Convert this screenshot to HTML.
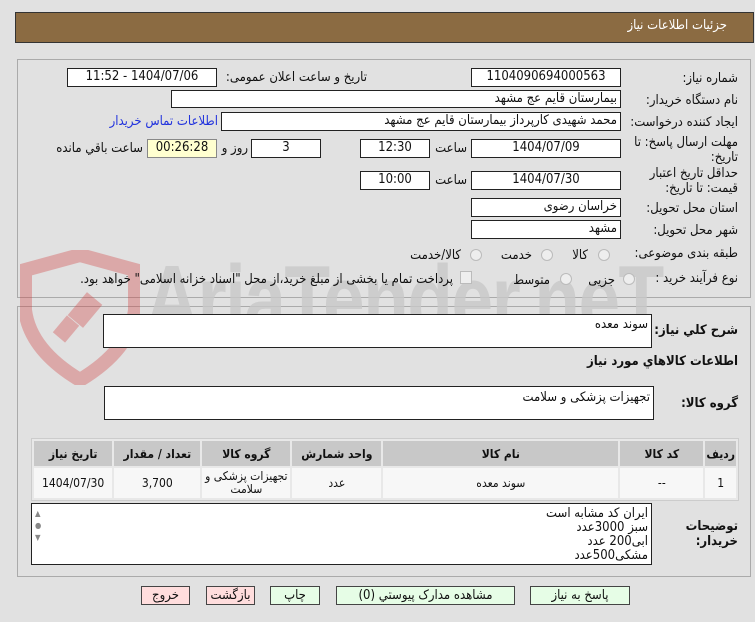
<!DOCTYPE html>
<html><head><meta charset="utf-8"><style>
body{margin:0;width:755px;height:622px;background:#e1e1e1;font-family:"DejaVu Sans Condensed","DejaVu Sans","Liberation Sans",sans-serif;font-size:12px;color:#111;position:relative;overflow:hidden}
.a{position:absolute}
.box{position:absolute;background:#fff;border:1px solid #222;box-sizing:border-box;direction:rtl;font-size:13px;line-height:16px;padding:0 3px;white-space:nowrap}
.c{text-align:center}
.l{position:absolute;direction:rtl;white-space:nowrap;font-size:13px}
.r{position:absolute;width:12px;height:12px;border-radius:50%;border:1px solid #bbb;background:#eee;box-sizing:border-box}
.btn{position:absolute;top:586px;height:19px;border:1px solid #444;box-sizing:border-box;text-align:center;font-size:13px;line-height:17px;direction:rtl}
table{border-collapse:separate;border-spacing:2px;position:absolute;left:31px;top:438px;width:708px;background:#e8e8e8;border:1px solid #ccc}
th{background:#c8c8c8;font-weight:bold;height:23px;font-size:12px}
td{background:#f7f7f7;height:28px;text-align:center;font-size:12px;line-height:13px}
</style></head><body>
<div class="a" style="left:15px;top:12px;width:739px;height:31px;background:#8b6b42;border:1px solid #333;box-sizing:border-box"></div>
<div class="l" style="right:28px;top:18px;color:#fff;font-size:13px">جزئیات اطلاعات نیاز</div>

<div class="a" style="left:17px;top:59px;width:734px;height:239px;border:1px solid #aaa;box-sizing:border-box"></div>
<div class="a" style="left:17px;top:306px;width:734px;height:271px;border:1px solid #aaa;box-sizing:border-box"></div>

<div class="a" style="left:20px;top:250px;width:120px;height:135px;opacity:.35">
<svg width="120" height="135" viewBox="0 0 120 135"><path d="M60 5 L115 20 L115 60 Q110 100 60 130 Q10 100 5 60 L5 20 Z" fill="none" stroke="#d04040" stroke-width="14"/><rect x="55" y="45" width="20" height="30" fill="#d04040" transform="rotate(40 65 60)"/><rect x="38" y="68" width="16" height="22" fill="#d04040" transform="rotate(40 46 79)"/></svg></div>
<div class="a" style="left:145px;top:245px;font-size:96px;font-family:'Liberation Sans',sans-serif;font-weight:bold;color:#c9c9c9;opacity:.8;letter-spacing:-2px;line-height:110px;transform:scaleX(.78);transform-origin:left">AriaTender.neT</div>

<div class="l" style="right:17px;top:71px">شماره نیاز:</div>
<div class="box c" style="left:471px;top:68px;width:150px;height:19px">1104090694000563</div>
<div class="l" style="right:388px;top:70px">تاریخ و ساعت اعلان عمومی:</div>
<div class="box c" style="left:67px;top:68px;width:150px;height:19px">1404/07/06 - 11:52</div>

<div class="l" style="right:17px;top:93px">نام دستگاه خریدار:</div>
<div class="box" style="left:171px;top:90px;width:450px;height:18px">بیمارستان قایم  عج  مشهد</div>

<div class="l" style="right:17px;top:115px">ایجاد کننده درخواست:</div>
<div class="box" style="left:221px;top:112px;width:400px;height:19px">محمد شهیدی کارپرداز بیمارستان قایم  عج  مشهد</div>
<div class="l" style="right:537px;top:114px;color:#2233dd">اطلاعات تماس خریدار</div>

<div class="l" style="right:17px;top:135px;line-height:15px">مهلت ارسال پاسخ: تا<br>تاریخ:</div>
<div class="box c" style="left:471px;top:139px;width:150px;height:19px">1404/07/09</div>
<div class="l" style="right:288px;top:141px">ساعت</div>
<div class="box c" style="left:360px;top:139px;width:70px;height:19px">12:30</div>
<div class="box c" style="left:251px;top:139px;width:70px;height:19px">3</div>
<div class="l" style="right:507px;top:141px">روز و</div>
<div class="box c" style="left:147px;top:139px;width:70px;height:19px;background:#ffffd0;border-color:#888">00:26:28</div>
<div class="l" style="right:612px;top:141px">ساعت باقي مانده</div>

<div class="l" style="right:17px;top:166px;line-height:15px">حداقل تاریخ اعتبار<br>قیمت: تا تاریخ:</div>
<div class="box c" style="left:471px;top:171px;width:150px;height:19px">1404/07/30</div>
<div class="l" style="right:288px;top:173px">ساعت</div>
<div class="box c" style="left:360px;top:171px;width:70px;height:19px">10:00</div>

<div class="l" style="right:17px;top:201px">استان محل تحویل:</div>
<div class="box" style="left:471px;top:198px;width:150px;height:19px">خراسان رضوی</div>
<div class="l" style="right:17px;top:223px">شهر محل تحویل:</div>
<div class="box" style="left:471px;top:220px;width:150px;height:19px">مشهد</div>

<div class="l" style="right:17px;top:246px">طبقه بندی موضوعی:</div>
<div class="r" style="left:598px;top:249px"></div><div class="l" style="right:167px;top:248px">کالا</div>
<div class="r" style="left:541px;top:249px"></div><div class="l" style="right:223px;top:248px">خدمت</div>
<div class="r" style="left:470px;top:249px"></div><div class="l" style="right:294px;top:248px">کالا/خدمت</div>

<div class="l" style="right:17px;top:271px">نوع فرآیند خرید :</div>
<div class="r" style="left:623px;top:273px"></div><div class="l" style="right:140px;top:273px">جزیی</div>
<div class="r" style="left:560px;top:273px"></div><div class="l" style="right:205px;top:273px">متوسط</div>
<div class="a" style="left:460px;top:271px;width:12px;height:13px;border:1px solid #bbb;background:#eee;box-sizing:border-box"></div>
<div class="l" style="right:302px;top:272px">پرداخت تمام یا بخشی از مبلغ خرید،از محل "اسناد خزانه اسلامی" خواهد بود.</div>

<div class="l" style="right:17px;top:323px;font-weight:bold">شرح کلي نیاز:</div>
<div class="box" style="left:103px;top:314px;width:549px;height:34px;padding-top:2px">سوند معده</div>
<div class="l" style="right:17px;top:354px;font-weight:bold">اطلاعات کالاهاي مورد نیاز</div>
<div class="l" style="right:17px;top:396px;font-weight:bold">گروه کالا:</div>
<div class="box" style="left:104px;top:386px;width:550px;height:34px;padding-top:3px">تجهیزات پزشکی و سلامت</div>

<table dir="rtl"><tr><th style="width:27px">ردیف</th><th style="width:81px">کد کالا</th><th style="width:233px">نام کالا</th><th style="width:87px">واحد شمارش</th><th style="width:86px">گروه کالا</th><th style="width:84px">تعداد / مقدار</th><th>تاریخ نیاز</th></tr>
<tr><td>1</td><td>--</td><td>سوند معده</td><td>عدد</td><td>تجهیزات پزشکی و سلامت</td><td>3,700</td><td>1404/07/30</td></tr></table>

<div class="l" style="right:17px;top:519px;font-weight:bold;line-height:15px">توضیحات<br>خریدار:</div>
<div class="box" style="left:31px;top:503px;width:621px;height:62px;line-height:14px;padding-top:3px">ایران کد مشابه است<br>سبز 3000عدد<br>ابی200 عدد<br>مشکی500عدد</div>
<div class="a" style="left:35px;top:508px;font-size:8px;color:#888;line-height:12px">▲<br>●<br>▼</div>

<div class="btn" style="left:530px;width:100px;background:#e6fde6">پاسخ به نیاز</div>
<div class="btn" style="left:336px;width:179px;background:#e6fde6">مشاهده مدارک پیوستي (0)</div>
<div class="btn" style="left:270px;width:50px;background:#e6fde6">چاپ</div>
<div class="btn" style="left:206px;width:49px;background:#fdd">بازگشت</div>
<div class="btn" style="left:141px;width:49px;background:#fdd">خروج</div>
</body></html>
